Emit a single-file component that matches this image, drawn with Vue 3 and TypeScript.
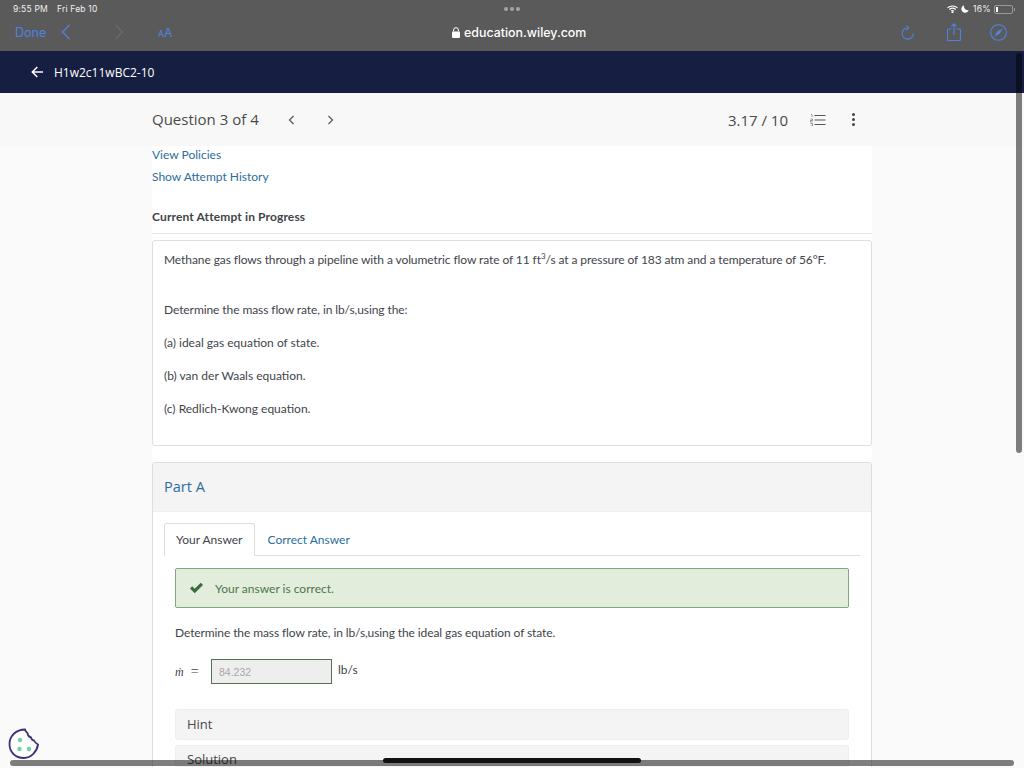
<script setup lang="ts">
const parts = ['(a) ideal gas equation of state.', '(b) van der Waals equation.', '(c) Redlich-Kwong equation.']
</script>

<template>
  <div class="screen">
    <div class="safari">
      <div class="status">
        <span>9:55 PM</span>
        <span class="date">Fri Feb 10</span>
        <span class="dots"><i></i><i></i><i></i></span>
        <span class="status-right">
          <svg width="11" height="8" viewBox="0 0 11 8" fill="none" stroke="#fff" stroke-width="1.1">
            <path d="M.5 2.800c2.800-2.400 7.200-2.400 10 0" />
            <path d="M2.300 4.500c1.800-1.500 4.600-1.500 6.400 0" />
            <path d="M4 6.100c.8-.6 2.200-.6 3 0" />
            <circle cx="5.500" cy="7.200" r=".5" fill="#fff" />
          </svg>
          <svg class="moon" width="8" height="8" viewBox="0 0 9 9"><path d="M3.400.3a4.300 4.300 0 1 0 5.300 5.600A4.600 4.600 0 0 1 3.400.3z" fill="#fff" /></svg>
          <span class="pct">16%</span>
          <span class="battery"><b></b></span>
          <span class="nub"></span>
        </span>
      </div>
      <div class="toolbar">
        <span class="done">Done</span>
        <svg class="back" width="10" height="16" viewBox="0 0 10 16" fill="none" stroke="#4d84e4" stroke-width="1.300"><path d="M8.500 1 1.500 8l7 7" /></svg>
        <svg class="forward" width="10" height="16" viewBox="0 0 10 16" fill="none" stroke="#6c6c6c" stroke-width="1.300"><path d="m1.500 1 7 7-7 7" /></svg>
        <span class="aa"><small>A</small>A</span>
        <span class="url">
          <svg width="8" height="11" viewBox="0 0 8 11"><path d="M1.600 4.500V3a2.400 2.400 0 0 1 4.800 0v1.500" fill="none" stroke="#fff" stroke-width="1" /><rect y="4.500" width="8" height="6.500" rx="1" fill="#fff" /></svg>
          education.wiley.com
        </span>
        <svg class="reload" width="13" height="15" viewBox="0 0 13 15" fill="none" stroke="#4d84e4" stroke-width="1.100">
          <path d="M5.600 3A5.600 5.600 0 1 0 12.300 8.500" />
          <path d="M5.200.6 7.800 3 5.200 5.300" />
        </svg>
        <svg class="share" width="14" height="18" viewBox="0 0 14 18" fill="none" stroke="#4d84e4" stroke-width="1.100">
          <path d="M4.500 6H1.500a1 1 0 0 0-1 1v9.500a1 1 0 0 0 1 1h11a1 1 0 0 0 1-1V7a1 1 0 0 0-1-1H9.500" />
          <path d="M7 12V1M4.500 3.300 7 .8l2.500 2.500" />
        </svg>
        <svg class="compass" width="17" height="17" viewBox="0 0 17 17">
          <circle cx="8.500" cy="8.500" r="7.800" fill="none" stroke="#4d84e4" stroke-width="1.100" />
          <path d="M12.800 4.200 9.700 9.700 4.200 12.800 7.300 7.300z" fill="#4d84e4" />
        </svg>
      </div>
    </div>

    <nav class="navbar">
      <svg width="12" height="12" viewBox="0 0 12 12" fill="none" stroke="#fff" stroke-width="1.500"><path d="M12 6H1.500M6.300 1 1.300 6l5 5" /></svg>
      <span>H1w2c11wBC2-10</span>
    </nav>

    <header class="q-header">
      <div class="column q-row">
        <span class="q-title">Question 3 of 4</span>
        <svg class="q-prev" width="7" height="10" viewBox="0 0 7 10" fill="none" stroke="#555" stroke-width="1.200"><path d="M5.500 1 1.500 5l4 4" /></svg>
        <svg class="q-next" width="7" height="10" viewBox="0 0 7 10" fill="none" stroke="#555" stroke-width="1.200"><path d="m1.500 1 4 4-4 4" /></svg>
        <span class="score">3.17 / 10</span>
        <svg class="list" width="16" height="12" viewBox="0 0 16 12" fill="none" stroke="#555">
          <path d="M4.500 1.500h11M4.500 6h11M4.500 10.500h11" />
          <path d="M1 .5h1v2.500M.5 5h2v1.500h-2V8h2M.5 9.500h2V12h-2" stroke-width=".6" />
        </svg>
        <span class="kebab"><i></i><i></i><i></i></span>
      </div>
    </header>

    <main class="column content">
      <a class="link policies">View Policies</a>
      <a class="link history">Show Attempt History</a>
      <h2 class="attempt">Current Attempt in Progress</h2>

      <section class="question">
        <p class="intro">Methane gas flows through a pipeline with a volumetric flow rate of 11 ft<sup>3</sup>/s at a pressure of 183 atm and a temperature of 56°F.</p>
        <p class="determine">Determine the mass flow rate, in lb/s,using the:</p>
        <p v-for="part in parts" :key="part" class="part-line">{{ part }}</p>
      </section>

      <section class="part">
        <div class="part-head">Part A</div>
        <div class="part-body">
          <div class="tabs">
            <span class="tab active">Your Answer</span>
            <span class="tab link">Correct Answer</span>
          </div>
          <div class="alert">
            <svg width="15" height="12" viewBox="0 0 15 12"><path d="M1 6.500 3.200 4.300 5.700 6.800 11.800.8 14 3 5.700 11.200z" fill="#3c6b3f" /></svg>
            <span>Your answer is correct.</span>
          </div>
          <p class="ask">Determine the mass flow rate, in lb/s,using the ideal gas equation of state.</p>
          <div class="answer">
            <span class="mdot"><em>ṁ</em><span class="eq">=</span></span>
            <span class="input">84.232</span>
            <span class="unit">lb/s</span>
          </div>
          <div class="collapse">Hint</div>
          <div class="collapse second">Solution</div>
        </div>
      </section>
    </main>

    <svg class="cookie" width="32" height="32" viewBox="0 0 32 32">
      <path d="M17 1.500c.5 2 1.200 2.800 2.500 3.500.2 2.500 1.200 4 3.500 4.500.5 2 1.500 2.800 3 3 .8 1.800 2.200 3 4 4-1 7-7 13.500-14 13.500C7 30 1.500 24 1.500 16 1.500 8 8 1.500 17 1.500z" fill="#fff" stroke="#3a3278" stroke-width="1.800" />
      <circle cx="12" cy="12" r="2.200" fill="#6fd3a8" />
      <circle cx="11.500" cy="21" r="2.200" fill="#6fd3a8" />
      <circle cx="21" cy="21" r="2.200" fill="#6fd3a8" />
    </svg>
    <div class="scroll-v"></div>
    <div class="scroll-h"></div>
    <div class="home"></div>
  </div>
</template>

<style>
html,
body {
  margin: 0;
  background: #fafafa;
}
</style>

<style scoped>
.screen {
  position: relative;
  width: 1024px;
  height: 768px;
  overflow: hidden;
  background: #fafafa;
  font-family: Lato, "Liberation Sans", sans-serif;
  color: #3f444b;
}

.safari {
  height: 51px;
  background: #5a5a5a;
  color: #fff;
  font-family: Inter, "Liberation Sans", sans-serif;
}

.status {
  position: relative;
  display: flex;
  align-items: center;
  height: 18px;
  padding-left: 13px;
  font-size: 8.500px;
  letter-spacing: 0.2px;
  color: #f0f0f0;
}

.date {
  margin-left: 9px;
}

.dots {
  position: absolute;
  left: 504px;
  top: 7px;
  display: flex;
  gap: 2px;
}

.dots i {
  width: 4px;
  height: 4px;
  border-radius: 50%;
  background: #a5a5a5;
}

.status-right {
  position: absolute;
  left: 947px;
  top: 2px;
  display: flex;
  align-items: center;
  height: 14px;
}

.moon {
  margin-left: 3px;
}

.pct {
  margin-left: 4px;
}

.battery {
  display: block;
  width: 15px;
  height: 5px;
  margin-left: 3px;
  padding: 1px;
  border: 1px solid #9a9a9a;
  border-radius: 2px;
}

.battery b {
  display: block;
  width: 2px;
  height: 5px;
  background: #fff;
}

.nub {
  width: 1px;
  height: 3px;
  margin-left: 1px;
  background: #9a9a9a;
}

.toolbar {
  position: relative;
  height: 33px;
}

.toolbar > * {
  position: absolute;
}

.done {
  left: 15px;
  top: 7px;
  font-size: 12.500px;
  color: #4d84e4;
}

.back {
  left: 61px;
  top: 6px;
}

.forward {
  left: 114px;
  top: 6px;
}

.aa {
  left: 158px;
  top: 7px;
  font-size: 12px;
  color: #4d84e4;
}

.aa small {
  font-size: 8.500px;
}

.url {
  left: 452px;
  top: 7px;
  display: flex;
  align-items: center;
  gap: 4px;
  font-size: 12.400px;
  font-weight: 500;
}

.reload {
  left: 901px;
  top: 7px;
}

.share {
  left: 947px;
  top: 5px;
}

.compass {
  left: 990px;
  top: 6px;
}

.navbar {
  display: flex;
  align-items: center;
  gap: 11px;
  height: 42px;
  padding-left: 31px;
  background: #161f42;
  color: #fff;
  font-family: "Open Sans", sans-serif;
  font-size: 12px;
  font-weight: 500;
}

.column {
  width: 720px;
  margin: 0 auto;
}

.q-header {
  height: 53px;
  background: #f8f8f8;
}

.q-row {
  display: flex;
  align-items: center;
  height: 53px;
}

.q-title {
  margin-top: -2px;
  font-family: "Open Sans", sans-serif;
  font-size: 15px;
  color: #4a4a4a;
}

.q-prev {
  margin-left: 29px;
}

.q-next {
  margin-left: 32px;
}

.score {
  margin-left: auto;
  font-family: "Open Sans", sans-serif;
  font-size: 15px;
  color: #4a4a4a;
}

.list {
  margin-left: 22px;
}

.kebab {
  display: flex;
  flex-direction: column;
  gap: 2px;
  margin: 0 17px 0 26px;
}

.kebab i {
  width: 3px;
  height: 3px;
  border-radius: 50%;
  background: #444;
}

.content {
  height: 622px;
  background: #fff;
  font-size: 12px;
}

.link {
  color: #2a6d9e;
}

.policies,
.history {
  display: block;
  line-height: 16px;
}

.policies {
  padding-top: 1px;
}

.history {
  margin-top: 6px;
}

.attempt {
  margin: 24px 0 0;
  padding-bottom: 8px;
  border-bottom: 1px solid #e6e6e6;
  font-size: 12px;
  font-weight: 700;
  line-height: 16px;
  letter-spacing: 0.13px;
  color: #3f444b;
}

.question {
  height: 206px;
  box-sizing: border-box;
  margin-top: 6px;
  padding: 0 11px;
  border: 1px solid #dedede;
  border-radius: 3px;
}

.question p {
  margin: 0;
  line-height: 16px;
  letter-spacing: -0.085px;
}

.question .part-line {
  letter-spacing: 0;
}

.intro {
  padding-top: 11px;
}

.intro sup {
  font-size: 8px;
  line-height: 0;
}

.determine {
  margin-top: 34px !important;
}

.part-line {
  margin-top: 17px !important;
}

.part {
  margin-top: 16px;
  border: 1px solid #dedede;
  border-bottom: 0;
  border-radius: 3px 3px 0 0;
}

.part-head {
  height: 48px;
  padding-left: 11px;
  border-bottom: 1px solid #eee;
  background: #f4f4f4;
  font-family: "Open Sans", sans-serif;
  font-size: 14.500px;
  line-height: 48px;
  color: #2a6d9e;
}

.part-body {
  padding: 11px 11px 0;
}

.tabs {
  display: flex;
  height: 32px;
  border-bottom: 1px solid #ddd;
}

.tab {
  height: 32px;
  box-sizing: border-box;
  padding: 0 11px;
  line-height: 32px;
  border: 1px solid transparent;
}

.tab.active {
  height: 33px;
  border-color: #ddd;
  border-bottom-color: #fff;
  border-radius: 3px 3px 0 0;
  background: #fff;
}

.tab.link {
  padding-left: 12px;
}

.alert {
  display: flex;
  align-items: center;
  gap: 11px;
  height: 40px;
  box-sizing: border-box;
  margin: 12px 11px 0;
  padding-left: 13px;
  border: 1px solid #83a67f;
  border-radius: 2px;
  background: #e2eedb;
  color: #4f7350;
}

.ask {
  margin: 17px 11px 0;
  line-height: 16px;
  letter-spacing: -0.1px;
}

.answer {
  display: flex;
  align-items: center;
  height: 25px;
  margin: 18px 11px 0;
}

.mdot {
  width: 36px;
  font-family: "Liberation Serif", serif;
  font-size: 12px;
}

.eq {
  margin-left: 7px;
  font-size: 14px;
}

.input {
  width: 121px;
  height: 25px;
  box-sizing: border-box;
  padding-left: 7px;
  border: 1px solid #55724f;
  background: #eee;
  font-family: "Liberation Sans", sans-serif;
  font-size: 10.500px;
  line-height: 24px;
  color: #a8a8a8;
}

.unit {
  margin: -4px 0 0 6px;
}

.collapse {
  height: 31px;
  box-sizing: border-box;
  margin: 25px 11px 0;
  padding-left: 11px;
  border: 1px solid #eee;
  border-radius: 3px;
  background: #f4f4f4;
  font-family: "Open Sans", sans-serif;
  font-size: 13px;
  line-height: 28px;
  color: #4a4a4a;
}

.collapse.second {
  height: 22px;
  margin-top: 5px;
  padding-top: 6px;
  border-bottom: 0;
  line-height: 15px;
}

.cookie {
  position: absolute;
  left: 8px;
  top: 728px;
}

.scroll-v {
  position: absolute;
  left: 1016px;
  top: 53px;
  width: 6px;
  height: 400px;
  border-radius: 3px;
  background: rgba(0, 0, 0, 0.5);
}

.scroll-h {
  position: absolute;
  left: 10px;
  top: 760px;
  width: 1004px;
  height: 6px;
  border-radius: 3px;
  background: rgba(0, 0, 0, 0.5);
}

.home {
  position: absolute;
  left: 383px;
  top: 758px;
  width: 258px;
  height: 5px;
  border-radius: 3px;
  background: #111;
}
</style>
